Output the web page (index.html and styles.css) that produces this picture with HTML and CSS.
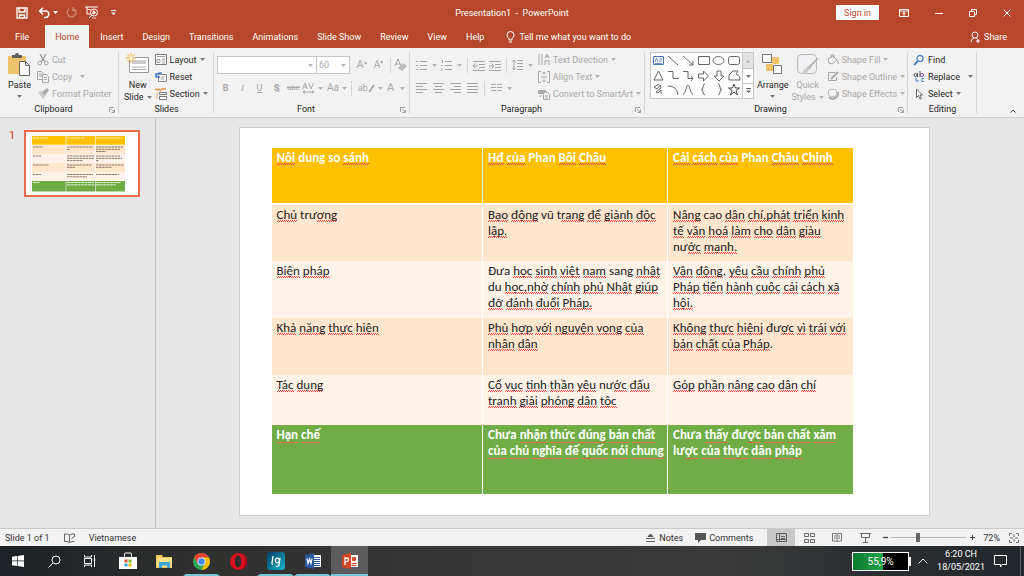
FILE: index.html
```html
<!DOCTYPE html>
<html lang="vi">
<head>
<meta charset="utf-8">
<title>Presentation1 - PowerPoint</title>
<link rel="stylesheet" href="styles.css">
</head>
<body>
<svg class="defs" aria-hidden="true">
  <symbol id="caret" viewBox="0 0 5 3"><path d="M0 0h5L2.500 3z" fill="currentColor"/></symbol>
  <symbol id="launch" viewBox="0 0 6 6"><path d="M.5 5V.5H5M2 2l3 3M5.500 2.500v3h-3" fill="none" stroke="currentColor" stroke-width=".8"/></symbol>
</svg>
<div class="app">
  <header class="titlebar">
    <div class="quick">
      <button aria-label="Save"><svg width="12" height="12" viewBox="0 0 12 12"><path d="M1 1h10v10H1zM3 1v4h6V1M3.500 11V8h5v3" class="ln2"/></svg></button>
      <button aria-label="Undo" class="undo"><svg width="12" height="12" viewBox="0 0 12 12"><path d="M2 4h5.500a3 3 0 0 1 0 6.500H6M5 .8L1.500 4 5 7.200" fill="none" stroke="#fff" stroke-width="1.500"/></svg><svg class="caret"><use href="#caret"/></svg></button>
      <button aria-label="Redo" class="dim"><svg width="11" height="11" viewBox="0 0 11 11"><path d="M7.500 1.800A4.300 4.300 0 1 1 3.200 2M7 0v3.500h3.500" class="ln2"/></svg></button>
      <button aria-label="Start from beginning"><svg width="14" height="13" viewBox="0 0 14 13"><path d="M0 1h13M2 1v7h4M4 12l3-3M2.500 3.500h3" class="ln"/><circle cx="9" cy="6.500" r="3.500" class="ln"/><path d="M8 4.800l3 1.700-3 1.700zM7 12h4" fill="#fff" stroke="#fff" stroke-width=".7"/></svg></button>
      <button aria-label="Customize"><svg width="5" height="6" viewBox="0 0 5 6"><path d="M0 .5h5" class="ln"/><path d="M0 2.500h5L2.500 5z" fill="#fff"/></svg></button>
    </div>
    <div class="doc">Presentation1&nbsp; -&nbsp; PowerPoint</div>
    <div class="winctl">
      <button class="signin">Sign in</button>
      <button aria-label="Ribbon display"><svg width="10" height="8" viewBox="0 0 10 8"><path d="M.5 .5h9v7h-9zM.5 2h9M5 7V3.500M3.500 4.700L5 3.300l1.500 1.400" class="ln"/></svg></button>
      <button aria-label="Minimize"><svg width="8" height="8" viewBox="0 0 8 8"><path d="M0 4.500h8" class="ln"/></svg></button>
      <button aria-label="Restore"><svg width="8" height="8" viewBox="0 0 8 8"><path d="M.5 2.500h5v5h-5zM2.500 2.500v-2h5v5h-2" class="ln"/></svg></button>
      <button aria-label="Close"><svg width="8" height="8" viewBox="0 0 8 8"><path d="M.5 .5l7 7M7.500 .5l-7 7" class="ln"/></svg></button>
    </div>
  </header>
  <nav class="tabs">
    <button class="file">File</button>
    <button class="on">Home</button>
    <button>Insert</button>
    <button>Design</button>
    <button>Transitions</button>
    <button>Animations</button>
    <button>Slide Show</button>
    <button>Review</button>
    <button>View</button>
    <button>Help</button>
    <button class="tell"><svg width="9" height="12" viewBox="0 0 9 12"><path d="M3 9V7.500Q1 6 1 4a3.500 3.500 0 0 1 7 0q0 2-2 3.500V9zM3 11h3" class="ln"/></svg>Tell me what you want to do</button>
    <button class="share"><svg width="11" height="12" viewBox="0 0 11 12"><circle cx="5" cy="4" r="3" class="ln"/><path d="M1 11q0-3 3-4M6.500 7l1 1M6 10h4M8 8v4" class="ln"/></svg>Share</button>
  </nav>

  <section class="ribbon">
    <div class="group">
      <div class="gbody clip">
        <button class="big"><svg width="23" height="24" viewBox="0 0 23 24"><path d="M0 3h18v18H0z" fill="#efc36c"/><path d="M4 2h3q0-2 2-2t2 2h3v3H4z" fill="#5f5f5f"/><path d="M11.500 8.500h6l4 4v10h-10z" fill="#fff" stroke="#666"/><path d="M17.500 8.500v4h4" fill="none" stroke="#666"/></svg><span>Paste</span><svg class="caret"><use href="#caret"/></svg></button>
        <div class="stack off">
          <button><svg width="12" height="12" viewBox="0 0 12 12"><path d="M3 0l5 8M9 0L4 8" stroke="#999" stroke-width="1.300"/><circle cx="2.700" cy="9" r="1.900" class="g"/><circle cx="9.300" cy="9" r="1.900" class="g"/></svg>Cut</button>
          <button><svg width="12" height="12" viewBox="0 0 12 12"><path d="M.5 .5h4l2 2v6h-6zM2 3h3M2 5h3" class="g"/><path d="M5.500 3.500h4l2 2v6h-6z" fill="#f2f2f2" stroke="#aaa"/><path d="M7 6.500h3M7 8.500h3" class="g"/></svg>Copy<svg class="caret wide"><use href="#caret"/></svg></button>
          <button><svg width="12" height="12" viewBox="0 0 12 12"><path d="M1 4l4-1 4 4-3 4z" fill="#ccc"/><path d="M5 4l5-4 2 2-4 5z" fill="#aaa"/></svg>Format Painter</button>
        </div>
      </div>
      <div class="glabel opt">Clipboard<button aria-label="Clipboard options"><svg width="6" height="6"><use href="#launch"/></svg></button></div>
    </div>

    <div class="group">
      <div class="gbody slides">
        <button class="big"><svg width="24" height="24" viewBox="0 0 24 24"><path d="M3.500 4.500h19v15h-19z" fill="#fff" stroke="#999"/><path d="M6 7h14v4H6z" fill="#ccc"/><path d="M6 14h14M6 16.500h14" stroke="#aaa"/><path d="M5 0v10M0 5h10M1.500 1.500l7 7M8.500 1.500l-7 7" stroke="#efc36c" stroke-width="1.300"/><circle cx="5" cy="5" r="2" fill="#fff3d5"/></svg><span>New</span><span>Slide <svg class="caret"><use href="#caret"/></svg></span></button>
        <div class="stack">
          <button><svg width="12" height="11" viewBox="0 0 12 11"><path d="M.5 .5h11v10H.5z" fill="#fff" stroke="#777"/><path d="M2 2.500h8M2 5.500h3v3H2zM7 5h3M7 7h3M7 9h3" fill="none" stroke="#999"/></svg>Layout<svg class="caret"><use href="#caret"/></svg></button>
          <button><svg width="12" height="12" viewBox="0 0 12 12"><path d="M3.500 3.500h8v7h-8z" fill="#fff" stroke="#888"/><path d="M5.500 6h4M5.500 8h4" stroke="#aaa"/><path d="M1 6q0-4.500 6-4M1 2v4h4" fill="none" stroke="#3b7cc0" stroke-width="1.400"/></svg>Reset</button>
          <button><svg width="12" height="12" viewBox="0 0 12 12"><path d="M0 1.500h5M5 3l2-2h4" fill="none" stroke="#e8903c" stroke-width="1.300"/><path d="M4.500 4.500h7v2h-7zM4.500 8.500h7v3h-7z" fill="#fff" stroke="#777"/><path d="M2 4v7" stroke="#e8b07a"/></svg>Section<svg class="caret"><use href="#caret"/></svg></button>
        </div>
      </div>
      <div class="glabel">Slides</div>
    </div>

    <div class="group">
      <div class="gbody rows off">
        <div class="row top">
          <div class="combo name"><select aria-label="Font"><option></option></select><svg class="caret"><use href="#caret"/></svg></div>
          <div class="combo size"><select aria-label="Font size"><option>60</option></select><svg class="caret"><use href="#caret"/></svg></div>
          <button class="sq t11" aria-label="Grow font">A<sup>▴</sup></button>
          <button class="sq t10" aria-label="Shrink font">A<sup>▾</sup></button>
          <i class="sep"></i>
          <button aria-label="Clear formatting"><svg width="12" height="12" viewBox="0 0 12 12"><path d="M0 7l3-7 3 7M1 5h4" class="g"/><path d="M3 9l5-5 4 3-5 5z" fill="#bbb"/></svg></button>
        </div>
        <div class="row fmt">
          <button class="sq"><b>B</b></button>
          <button class="sq ser"><em>I</em></button>
          <button class="sq"><u>U</u></button>
          <button class="sq shadow"><b>S</b></button>
          <button class="sq t8"><s>abc</s></button>
          <button class="drop" aria-label="Character spacing"><svg width="13" height="12" viewBox="0 0 13 12"><path d="M.5 7l2.500-6 2.500 6M1.500 5h3M6.500 1L9 7l2.500-6M1 10h11M3 8.500L1 10l2 1.500M10 8.500l2 1.500-2 1.500" class="g"/></svg><svg class="caret"><use href="#caret"/></svg></button>
          <button class="drop t10">Aa<svg class="caret"><use href="#caret"/></svg></button>
          <i class="sep"></i>
          <button class="drop hl" aria-label="Highlight"><span>ab</span><svg width="6" height="9" viewBox="0 0 6 9"><path d="M0 8l5-7" stroke="#999" stroke-width="1.500"/></svg><svg class="caret"><use href="#caret"/></svg></button>
          <button class="drop t11 fc">A<svg class="caret"><use href="#caret"/></svg></button>
        </div>
      </div>
      <div class="glabel opt">Font<button aria-label="Font options"><svg width="6" height="6"><use href="#launch"/></svg></button></div>
    </div>

    <div class="group">
      <div class="gbody para off">
        <div class="rows">
          <div class="row top">
            <button class="drop" aria-label="Bullets"><svg width="11" height="11" viewBox="0 0 11 11"><path d="M4 1.500h7M4 5.500h7M4 9.500h7M0 1.500h2M0 5.500h2M0 9.500h2" class="g"/></svg><svg class="caret"><use href="#caret"/></svg></button>
            <button class="drop" aria-label="Numbering"><svg width="11" height="11" viewBox="0 0 11 11"><path d="M4 1.500h7M4 5.500h7M4 9.500h7M1.500 0v3M0 5.500h2M1 8v3" class="g"/></svg><svg class="caret"><use href="#caret"/></svg></button>
            <i class="sep"></i>
            <button aria-label="Decrease indent"><svg width="12" height="11" viewBox="0 0 12 11"><path d="M0 1.500h12M6 4.500h6M6 7.500h6M0 10.500h12M0 6h5M2.500 3.500L0 6l2.500 2.500" class="g"/></svg></button>
            <button aria-label="Increase indent"><svg width="12" height="11" viewBox="0 0 12 11"><path d="M0 1.500h12M6 4.500h6M6 7.500h6M0 10.500h12M0 6h5M2.500 3.500L5 6 2.500 8.500" class="g"/></svg></button>
            <i class="sep"></i>
            <button class="drop" aria-label="Line spacing"><svg width="11" height="12" viewBox="0 0 11 12"><path d="M5 1.500h6M5 4.500h6M5 7.500h6M5 10.500h6M2 1v10M.5 3L2 1l1.500 2M.5 9L2 11l1.500-2" class="g"/></svg><svg class="caret"><use href="#caret"/></svg></button>
          </div>
          <div class="row align">
            <button aria-label="Align left"><svg width="11" height="10" viewBox="0 0 11 10"><path d="M0 .5h11M0 3.500h7M0 6.500h11M0 9.500h7" class="g"/></svg></button>
            <button aria-label="Center"><svg width="11" height="10" viewBox="0 0 11 10"><path d="M0 .5h11M2 3.500h7M0 6.500h11M2 9.500h7" class="g"/></svg></button>
            <button aria-label="Align right"><svg width="11" height="10" viewBox="0 0 11 10"><path d="M0 .5h11M4 3.500h7M0 6.500h11M4 9.500h7" class="g"/></svg></button>
            <button aria-label="Justify"><svg width="11" height="10" viewBox="0 0 11 10"><path d="M0 .5h11M0 3.500h11M0 6.500h11M0 9.500h11" class="g"/></svg></button>
            <i class="sep"></i>
            <button class="drop" aria-label="Columns"><svg width="11" height="10" viewBox="0 0 11 10"><path d="M0 1.500h5M0 4.500h5M0 7.500h5M6 1.500h5M6 4.500h5M6 7.500h5" class="g"/></svg><svg class="caret"><use href="#caret"/></svg></button>
          </div>
        </div>
        <div class="stack">
          <button><svg width="12" height="12" viewBox="0 0 12 12"><path d="M1 0v11M4 0v11M7 11V6M11 11V6M7 4l2-4 2 4M7 7h4M8 2.500h2" class="g"/></svg>Text Direction<svg class="caret"><use href="#caret"/></svg></button>
          <button><svg width="12" height="12" viewBox="0 0 12 12"><path d="M3 .5H.5v11H3M9 .5h2.500v11H9M6 1v3M6 11V8M3 6h6M4.500 2.500L6 1l1.500 1.500M4.500 9.500L6 11l1.500-1.500" class="g"/></svg>Align Text<svg class="caret"><use href="#caret"/></svg></button>
          <button><svg width="12" height="12" viewBox="0 0 12 12"><path d="M0 2h7l2 2-2 2H0z" fill="#aaa"/><path d="M5.500 4.500h4l2 2v5h-6z" fill="#f2f2f2" stroke="#aaa"/><path d="M1 8h3M7 8h3M7 10h3" class="g"/></svg>Convert to SmartArt<svg class="caret"><use href="#caret"/></svg></button>
        </div>
      </div>
      <div class="glabel opt">Paragraph<button aria-label="Paragraph options"><svg width="6" height="6"><use href="#launch"/></svg></button></div>
    </div>

    <div class="group">
      <div class="gbody drawing">
        <div class="gallery">
          <svg width="91" height="44" viewBox="0 0 91 44" role="img" aria-label="Shapes">
            <g fill="none" stroke="#666">
              <path d="M2.500 3.500h10v8h-10z" stroke="#4a78b5"/><path d="M4 9l1.500-4L7 9M8 6h3M8 8h3M4 10.500h7" stroke="#4a78b5" stroke-width=".8"/>
              <path d="M17 3l10 9M32 3l10 9M42 8v4h-4"/><path d="M47.500 3.500h11v8h-11z"/><ellipse cx="67.500" cy="7.500" rx="5.500" ry="4"/><rect x="77.500" y="3.500" width="11" height="8" rx="2"/>
              <path d="M7.500 18l4.500 9H3zM17 18.500h5v7h6M32 18.500h5v7h5M40 23l2 2.500-2 2.500"/>
              <path d="M47.500 21h5v-3l5 5-5 5v-3h-5zM66 18h4v5h3l-5 5-5-5h3zM78 27v-5l4-4h5q-3 3-1 4 3 0 3 5z"/>
              <path d="M8 31l-5 3 3 2 3-4 1 3-5 4 2 1 3-3v4M17 33q9 0 10 9M32 41c3 0 3-9 5-9s2 9 5 9"/>
              <path d="M54 31q-2 0-2 3t-2 2.500q2 0 2 2.500t2 3M67 31q2 0 2 3t2 2.500q-2 0-2 2.500t-2 3"/>
              <path d="M83 31l1.500 4h4L85 37.500l1.500 4.500-3.500-3-3.500 3 1.500-4.500-3.500-2.500h4z" stroke="#444"/>
            </g>
          </svg>
          <div class="scroll"><button aria-label="Scroll up" disabled>▴</button><button aria-label="Scroll down"><svg class="caret"><use href="#caret"/></svg></button><button aria-label="More shapes"><svg width="5" height="6" viewBox="0 0 5 6"><path d="M0 .5h5" stroke="#666"/><path d="M0 2.500h5L2.500 5z" fill="#666"/></svg></button></div>
        </div>
        <button class="big"><svg width="21" height="24" viewBox="0 0 21 24"><path d="M10 4h7v7h-7zM4 11h7v7H4z" fill="#efc36c"/><path d="M.5 1.500h9v8h-9zM11.500 12.500h8v8h-8z" fill="#fff" stroke="#777"/></svg><span>Arrange</span><svg class="caret"><use href="#caret"/></svg></button>
        <button class="big off"><svg width="24" height="24" viewBox="0 0 24 24"><rect x="1.500" y="1.500" width="19" height="19" rx="4" fill="#f0f0f2" stroke="#bbb"/><path d="M22 5l-9 11-2-1z" fill="#ccc" stroke="#aaa"/><path d="M11 15q-4 1-5 6 5 1 7-5z" fill="#ccc"/></svg><span>Quick</span><span>Styles <svg class="caret"><use href="#caret"/></svg></span></button>
        <div class="stack off">
          <button><svg width="12" height="12" viewBox="0 0 12 12"><path d="M1 5l5-3 4 4-5 4-3-1zM4 4V1h3v3M10 6q2 2 1 4" class="g"/></svg>Shape Fill<svg class="caret"><use href="#caret"/></svg></button>
          <button><svg width="12" height="12" viewBox="0 0 12 12"><path d="M8 1.500H1.500v8h8V6" class="g"/><path d="M4 8l7-7" stroke="#aaa" stroke-width="2"/></svg>Shape Outline<svg class="caret"><use href="#caret"/></svg></button>
          <button><svg width="12" height="12" viewBox="0 0 12 12"><path d="M2 9q2 3 6 1t3-6" fill="none" stroke="#aaa" stroke-width="2"/><rect x="1.500" y="1.500" width="8" height="7" rx="2.500" fill="#f5f5f5" stroke="#bbb"/></svg>Shape Effects<svg class="caret"><use href="#caret"/></svg></button>
        </div>
      </div>
      <div class="glabel opt">Drawing<button aria-label="Drawing options"><svg width="6" height="6"><use href="#launch"/></svg></button></div>
    </div>

    <div class="group">
      <div class="gbody edit">
        <div class="stack">
          <button><svg width="12" height="12" viewBox="0 0 12 12"><circle cx="7" cy="4.500" r="3" fill="#fff" stroke="#4b83c4" stroke-width="1.300"/><path d="M5 7l-4 4" stroke="#4b83c4" stroke-width="1.800"/></svg>Find</button>
          <button><svg width="12" height="12" viewBox="0 0 12 12"><circle cx="2.500" cy="4" r="1.500" fill="none" stroke="#555"/><path d="M4.500 2v4M7 0v6" stroke="#555"/><circle cx="9" cy="4" r="1.600" fill="none" stroke="#8a5fb5"/><path d="M3 7v3h3M11 7.500H9v3h2" fill="none" stroke="#4b83c4"/></svg>Replace<svg class="caret wide"><use href="#caret"/></svg></button>
          <button><svg width="12" height="12" viewBox="0 0 12 12"><path d="M3.500 1v8.500l2-2 1.500 3.500 1.500-.7L7 7h2.500z" fill="#fff" stroke="#555" stroke-width=".9"/></svg>Select<svg class="caret"><use href="#caret"/></svg></button>
        </div>
      </div>
      <div class="glabel">Editing</div>
    </div>
    <div class="fold"><button aria-label="Collapse ribbon"><svg width="6" height="4" viewBox="0 0 6 4"><path d="M.5 3.500L3 1l2.500 2.500" fill="none" stroke="#555"/></svg></button></div>
  </section>

  <main class="work">
    <aside class="thumbs">
      <span class="num">1</span>
      <svg class="thumb" viewBox="0 0 112 63" role="img" aria-label="Slide 1">
        <rect width="112" height="63" fill="#fff"/>
        <path d="M6 4h93v9H6z" fill="#ffc000"/><path d="M6 13h93v9H6zM6 31h93v9H6z" fill="#ffe6cd"/><path d="M6 22h93v9H6zM6 40h93v9H6z" fill="#fff2e8"/><path d="M6 49h93v10.500H6z" fill="#6fac46"/>
        <path d="M40 4v56M69.500 4v56M6 13h93" stroke="#fff" stroke-width=".6"/>
        <g stroke="#fff" stroke-opacity=".8" stroke-dasharray="3 .5"><path d="M7 6h15M41 6h18M70 6h26M7 50.500h7M41 50.500h27M41 52.800h28M70 50.500h25M70 52.800h20"/></g>
        <g stroke="#8a7566" stroke-dasharray="2.500 .6"><path d="M7 15h10M41 15h26M41 17.500h3M70 15h27M70 17.300h24M70 19.500h10M7 24h8M41 24h28M41 26.300h27M41 28.600h16M70 24h24M70 26.300h26M70 28.600h3M7 33h16M41 33h25M41 35.300h8M70 33h28M70 35.300h16M7 42.500h8M41 42.500h26M41 44.800h20M70 42.500h23"/></g>
      </svg>
    </aside>
    <div class="canvas">
      <article class="slide">
        <table>
          <colgroup><col class="c1"><col class="c2"><col class="c3"></colgroup>
          <thead>
            <tr><th><q>Nôi</q> dung so <q>sánh</q></th><th><q>Hđ</q> <q>của</q> Phan <q>Bôi</q> <q>Châu</q></th><th><q>Cải</q> <q>cách</q> <q>của</q> Phan <q>Châu</q> <q>Chinh</q></th></tr>
          </thead>
          <tbody>
            <tr class="a"><td><q>Chủ</q> trư<q>ơng</q></td><td><q>Bạo</q> <q>động</q> vũ t<q>rang</q> <q>để</q> <q>giành</q> <q>độc</q><br><q>lập.</q></td><td><q>Nâng</q> cao <q>dân</q> <q>chí,phát</q> <q>triển</q> <q>kinh</q><br><q>tế</q> <q>văn</q> <q>hoá</q> <q>làm</q> <q>cho</q> <q>dân</q> <q>giàu</q><br>nư<q>ớc</q> <q>mạnh.</q></td></tr>
            <tr class="b"><td><q>Biện</q> <q>pháp</q></td><td>Đưa <q>học</q> <q>sinh</q> <q>việt</q> <q>nam</q> sang <q>nhật</q><br>du <q>học,nhờ</q> <q>chính</q> <q>phủ</q> <q>Nhật</q> <q>giúp</q><br><q>đỡ</q> <q>đánh</q> <q>đuổi</q> <q>Pháp.</q></td><td><q>Vận</q> <q>động</q>, <q>yêu</q> <q>cầu</q> <q>chính</q> <q>phủ</q><br><q>Pháp</q> <q>tiến</q> <q>hành</q> <q>cuộc</q> <q>cải</q> <q>cách</q> <q>xã</q><br><q>hội.</q></td></tr>
            <tr class="a"><td><q>Khả</q> <q>năng</q> <q>thực</q> <q>hiện</q></td><td><q>Phù</q> <q>hợp</q> <q>với</q> <q>nguyện</q> <q>vọng</q> <q>của</q><br><q>nhân</q> <q>dân</q></td><td><q>Không</q> <q>thực</q> <q>hiệnj</q> đư<q>ợc</q> <q>vì</q> <q>trái</q> <q>với</q><br><q>bản</q> <q>chất</q> <q>của</q> <q>Pháp</q>.</td></tr>
            <tr class="b short"><td><q>Tác</q> <q>dụng</q></td><td><q>Cổ</q> <q>vục</q> <q>tinh</q> <q>thần</q> <q>yêu</q> nư<q>ớc</q> <q>đấu</q><br><q>tranh</q> <q>giải</q> <q>phóng</q> <q>dân</q> <q>tộc</q></td><td><q>Góp</q> <q>phần</q> <q>nâng</q> <q>cao</q> <q>dân</q> <q>chí</q></td></tr>
            <tr class="last"><th><q>Hạn</q> <q>chế</q></th><th>Chưa <q>nhận</q> <q>thức</q> <q>đúng</q> <q>bản</q> <q>chất</q><br><q>của</q> <q>chủ</q> <q>nghĩa</q> <q>đế</q> <q>quốc</q> <q>nói</q> <q>chung</q></th><th>Chưa <q>thấy</q> đư<q>ợc</q> <q>bản</q> <q>chất</q> <q>xâm</q><br>lư<q>ợc</q> <q>của</q> <q>thực</q> <q>dân</q> <q>pháp</q></th></tr>
          </tbody>
        </table>
      </article>
    </div>
  </main>

  <footer class="status">
    <span>Slide 1 of 1</span>
    <svg class="book" width="12" height="10" viewBox="0 0 12 10"><path d="M5.500 9V2Q3 .5.500 1v7.500Q3 8 5.500 9.500 8 8 10.500 8.500M5.500 2Q8 .5 10.500 1v3M7.500 6l3-3" fill="none" stroke="#666"/></svg>
    <span>Vietnamese</span>
    <div class="sright">
      <button class="notes"><svg width="9" height="8" viewBox="0 0 9 8"><path d="M0 4.500h9M0 7.500h9M2 2.500h5L4.500 0z" stroke="#555" fill="#555" stroke-width=".9"/></svg>Notes</button>
      <button class="comm"><svg width="11" height="10" viewBox="0 0 11 10"><path d="M0 0h11v7H6L3 10V7H0z" fill="#555"/></svg>Comments</button>
      <button class="view on" aria-label="Normal"><svg width="11" height="9" viewBox="0 0 11 9"><path d="M.5 .5h10v8H.5zM3.500 .5v8M5 3.500h4M5 5.500h4M.5 6.500h10" fill="none" stroke="#555" stroke-width=".9"/></svg></button>
      <button class="view" aria-label="Slide sorter"><svg width="11" height="10" viewBox="0 0 11 10"><path d="M.5 .5h4v3h-4zM6.500 .5h4v3h-4zM.5 6.500h4v3h-4zM6.500 6.500h4v3h-4z" fill="none" stroke="#666"/></svg></button>
      <button class="view" aria-label="Reading view"><svg width="10" height="9" viewBox="0 0 10 9"><path d="M5 8.500V1Q3 0 .5.500v7.500h3L5 9l1.500-1h3V.5Q7 0 5 1M2 3h2M2 5h2M6 3h2M6 5h2" fill="none" stroke="#666" stroke-width=".9"/></svg></button>
      <button class="view" aria-label="Slide show"><svg width="11" height="10" viewBox="0 0 11 10"><path d="M0 .5h11M1.500 .5v4h8v-4M5.500 5v4M3 9.500h5" fill="none" stroke="#666"/></svg></button>
      <button class="out" aria-label="Zoom out"><svg width="5" height="5" viewBox="0 0 5 5"><path d="M0 2.500h5" stroke="#444" stroke-width="1.300"/></svg></button>
      <input type="range" min="10" max="240" value="90" aria-label="Zoom">
      <button aria-label="Zoom in"><svg width="5" height="5" viewBox="0 0 5 5"><path d="M0 2.500h5M2.500 0v5" stroke="#444"/></svg></button>
      <button class="pct">72%</button>
      <button aria-label="Fit slide"><svg width="10" height="10" viewBox="0 0 10 10"><path d="M.5 3V.5H3M7 .5h2.500V3M9.500 7v2.500H7M3 9.500H.5V7" fill="none" stroke="#777"/><path d="M5 1v3M5 9V6M1 5h3M9 5H6" stroke="#777"/></svg></button>
    </div>
  </footer>

  <footer class="taskbar">
    <div class="sys">
      <button aria-label="Start"><svg width="12" height="12" viewBox="0 0 12 12"><path d="M0 1.700L5 1v4.600H0zM5.700 .9L12 0v5.600H5.700zM0 6.300h5V11l-5-.7zM5.700 6.300H12V12l-6.300-.9z" fill="#fff"/></svg></button>
      <button aria-label="Search"><svg width="13" height="13" viewBox="0 0 13 13"><circle cx="8" cy="5" r="4" class="ln"/><path d="M5 8l-4.500 4.500" class="ln"/></svg></button>
      <button aria-label="Task view"><svg width="12" height="12" viewBox="0 0 12 12"><path d="M.5 0v2h7V0M.5 12v-2h7v2M.5 3.500h7v5h-7zM10.500 0v12M9.500 5h2" class="ln"/></svg></button>
    </div>
    <div class="apps">
      <button aria-label="Store"><svg width="18" height="18" viewBox="0 0 18 18"><path d="M5.500 6V2Q5.500 1 6.500 1h5q1 0 1 1v4" fill="none" stroke="#fff"/><path d="M0 5h18v12H0z" fill="#fff"/><path d="M5.500 7.500h3v3h-3z" fill="#e34f26"/><path d="M9.500 7.500h3v3h-3z" fill="#7cb82f"/><path d="M5.500 11.500h3v3h-3z" fill="#2a9fe0"/><path d="M9.500 11.500h3v3h-3z" fill="#f5b800"/></svg></button>
      <button aria-label="Files"><svg width="17" height="15" viewBox="0 0 17 15"><path d="M0 1h6l1 2h9v11H0z" fill="#f3c757"/><path d="M1 4h15v9H1z" fill="#fbe08c"/><path d="M3 8h11v6h-3v-2.500H6V14H3z" fill="#3ea4dc"/></svg></button>
      <button aria-label="Chrome" class="run"><svg width="17" height="17" viewBox="0 0 17 17"><circle cx="8.500" cy="8.500" r="8.500" fill="#34a853"/><path d="M1 4.500a8.500 8.500 0 0 1 15 0H8.500L5 10z" fill="#ea4335"/><path d="M16 4.500A8.500 8.500 0 0 1 8.500 17l4-7L8.500 4.500z" fill="#fbbc04"/><circle cx="8.500" cy="8.500" r="4" fill="#fff"/><circle cx="8.500" cy="8.500" r="3.200" fill="#4285f4"/></svg></button>
      <button aria-label="Opera"><svg width="17" height="17" viewBox="0 0 17 17"><ellipse cx="8.500" cy="8.500" rx="8.500" ry="8.500" fill="#d8101f"/><path d="M9 0a8.500 8.500 0 0 1 0 17 6 8 0 0 0 0-17" fill="#a30f1a"/><ellipse cx="8" cy="8.500" rx="3.200" ry="6" fill="#2e2e2e"/></svg></button>
      <button aria-label="Lg" class="run"><svg width="18" height="18" viewBox="0 0 18 18"><defs><linearGradient id="lg" x2="1" y2="1"><stop stop-color="#063c66"/><stop offset="1" stop-color="#12b5c9"/></linearGradient></defs><rect width="18" height="18" rx="3" fill="url(#lg)"/><path d="M6 4L5 11q0 1.500 1 1.500M13 6l-1 7q-.5 2-3.500 1" fill="none" stroke="#fff" stroke-width="1.300"/><ellipse cx="10.300" cy="8.500" rx="2" ry="2.300" fill="none" stroke="#fff" stroke-width="1.200"/></svg></button>
      <button aria-label="Word" class="run"><svg width="16" height="16" viewBox="0 0 16 16"><path d="M8 2h8v12H8z" fill="#fff"/><path d="M9 4.500h6M9 6.500h6M9 8.500h6M9 10.500h6M9 12.500h6" stroke="#2b579a"/><path d="M0 2l9-2v16l-9-2z" fill="#2b579a"/><path d="M2 5.500l1 5 1.500-4.500L6 10.500l1-5" fill="none" stroke="#fff" stroke-width="1.200"/></svg></button>
      <button aria-label="PowerPoint" class="run cur"><svg width="16" height="16" viewBox="0 0 16 16"><path d="M8 2h8v12H8z" fill="#fff"/><circle cx="12" cy="6" r="2.300" fill="#d24726"/><path d="M9.500 10.500h5M9.500 12.500h5" stroke="#d24726"/><path d="M0 2l9-2v16l-9-2z" fill="#d24726"/><path d="M3 12V5h1.800q1.700 0 1.700 1.800T4.800 8.600H3" fill="none" stroke="#fff" stroke-width="1.300"/></svg></button>
    </div>
    <div class="tray">
      <div class="batt">55,9%</div>
      <button aria-label="Show hidden icons"><svg width="10" height="6" viewBox="0 0 10 6"><path d="M.5 5.500L5 1l4.500 4.500" class="ln"/></svg></button>
      <div class="clock">6:20 CH<br>18/05/2021</div>
      <button aria-label="Notifications"><svg width="13" height="13" viewBox="0 0 13 13"><path d="M.5 .5h12v9H8L6.500 12V9.500h-6z" class="ln"/></svg></button>
      <i class="peek"></i>
    </div>
  </footer>
</div>
</body>
</html>
```
FILE: styles.css
```css
* { box-sizing: border-box; }
body {
  margin: 0;
  font: 9px/12px Roboto, "Noto Sans", sans-serif;
  color: #262626;
}
button, select {
  font: inherit;
  color: inherit;
  background: none;
  border: 0;
  margin: 0;
  padding: 0;
  display: inline-flex;
  align-items: center;
  white-space: nowrap;
}
svg { display: block; flex: none; }
.defs { display: none; }
.ln { fill: none; stroke: #fff; stroke-width: 1; }
.ln2 { fill: none; stroke: #fff; stroke-width: 1.3; }
.g { fill: none; stroke: #a6a6a6; stroke-width: 1; }
.caret { width: 5px; height: 3px; color: #777; }
.off { color: #a9a9a9; }
.off .caret { color: #b3b3b3; }

.app { display: flex; flex-direction: column; height: 100vh; overflow: hidden; }

/* title bar */
.titlebar {
  display: grid;
  grid-template-columns: 1fr auto 1fr;
  align-items: center;
  height: 25px;
  background: #b7472a;
  color: #fff;
}
.quick { display: flex; align-items: center; gap: 8px; padding-left: 16px; }
.quick .undo { gap: 3px; margin-left: 2px; }
.undo .caret { color: #fff; }
.quick .dim { opacity: 0.35; }
.quick button:last-child { margin-left: 4px; }
.winctl { display: flex; justify-content: flex-end; align-items: center; gap: 26px; padding-right: 13px; }
.signin { background: #fff; color: #b7472a; height: 15px; padding: 0 8px; margin-right: -6px; }

/* tabs */
.tabs { display: flex; height: 23px; background: #b7472a; color: #fff; }
.tabs button { padding: 0 10px 0 9px; }
.tabs .file { padding: 0 16px 0 15px; }
.tabs .on { background: #f2f2f2; color: #b7472a; padding: 0 10px; margin-right: 2px; }
.tabs .tell { gap: 4px; padding-left: 12px; }
.tabs .share { margin-left: auto; gap: 3px; padding-right: 17px; }

/* ribbon */
.ribbon {
  display: grid;
  grid-template-columns: 119fr 95fr 196fr 235fr 263fr 69fr 47fr;
  height: 70px;
  background: #f2f2f2;
  border-bottom: 1px solid #cfcfcf;
}
.group { position: relative; display: flex; flex-direction: column; min-width: 0; }
.group::after {
  content: "";
  position: absolute;
  right: 0;
  top: 4px;
  bottom: 4px;
  border-right: 1px solid #d5d5d5;
}
.gbody { display: flex; flex: 1; padding-top: 3px; }
.glabel { position: relative; height: 14px; text-align: center; }
.opt { padding-right: 12px; }
.glabel button { position: absolute; right: 4px; top: 4px; color: #888; }
.stack { display: flex; flex-direction: column; }
.stack button { height: 17px; gap: 3px; }
.stack .wide { margin-left: 5px; }
.big { flex-direction: column; align-items: center; padding-top: 2px; height: 52px; }
.big > svg:first-child { margin-bottom: 2px; }
.big span { height: 12px; display: flex; align-items: center; gap: 3px; }
.big > .caret { margin-top: 4px; }
.clip { padding-left: 8px; gap: 6px; }
.slides { padding-left: 5px; gap: 3px; }
.rows { display: flex; flex-direction: column; gap: 5px; }
.gbody.rows { padding: 8px 0 0 3px; }
.row { display: flex; align-items: center; height: 18px; }
.sep { width: 1px; height: 15px; background: #d5d5d5; }
.combo { position: relative; display: flex; align-items: center; height: 18px; background: #fff; border: 1px solid #c6c6c6; }
.combo select { appearance: none; width: 100%; padding-left: 2px; }
.combo .caret { position: absolute; right: 3px; pointer-events: none; }
.name { width: 100px; }
.size { width: 34px; margin-left: -1px; margin-right: 3px; }
.sq { width: 17px; flex: none; justify-content: center; }
.top .sep { margin: 0 4px 0 3px; }
.sq sup { font-size: 6px; line-height: 6px; align-self: flex-start; }
.t8 { font-size: 8px; }
.t10 { font-size: 10px; }
.t11 { font-size: 11px; }
.ser { font-family: "Liberation Serif", serif; }
.shadow { text-shadow: 1px 1px 0 #ccc; }
.drop { gap: 3px; }
.fmt .drop { margin-right: 4px; }
.fmt .sep { margin-right: 6px; }
.hl { gap: 1px; }
.hl .caret { margin-left: 2px; }
.fmt .fc { gap: 6px; margin: 0; }
.para { justify-content: space-between; padding-right: 4px; }
.para .rows { padding: 5px 0 0 6px; }
.para .row { gap: 4px; }
.para .align { gap: 6px; }
.para .drop { gap: 5px; }
.para .top .sep { margin: 0 1px; }
.drawing { padding: 3px 0 0 5px; gap: 3px; }
.gallery { display: flex; border: 1px solid #c6c6c6; background: #fff; height: 47px; margin-top: 1px; }
.scroll { display: grid; grid-template-rows: repeat(3, 1fr); width: 11px; }
.scroll button { justify-content: center; border-left: 1px solid #c6c6c6; border-top: 1px solid #c6c6c6; }
.scroll button:first-child { border-top: 0; background: #e2e2e2; color: #bbb; font-size: 8px; }
.edit { padding-left: 5px; }
.fold { display: flex; justify-content: flex-end; align-items: flex-end; padding: 0 8px 4px 0; }

/* work area */
.work { flex: 1; display: flex; min-height: 0; background: #e6e6e6; border-bottom: 1px solid #c9c9c9; }
.thumbs { width: 156px; flex: none; display: flex; align-items: flex-start; gap: 9px; padding: 11px 0 0 9px; border-right: 1px solid #c3c3c3; }
.num { font-size: 11px; line-height: 14px; color: #c8452c; width: 6px; }
.thumb { width: 116px; margin-top: 1px; border: 2px solid #ec6b4d; }
.canvas { flex: 1; display: flex; justify-content: center; align-items: flex-start; padding: 9px 12px 0 0; }
.slide { width: 81%; max-width: 691px; aspect-ratio: 16 / 9; background: #fff; border: 1px solid #cfcfcf; padding: 20px 76px 0 32px; }
table {
  width: 100%;
  border-collapse: collapse;
  table-layout: fixed;
  font: 13px/16px Carlito, Lato, sans-serif;
  color: #1c1c1c;
}
.c1 { width: 211px; }
.c2 { width: 185px; }
th, td { height: 57px; padding: 2px 0 0 5px; text-align: left; vertical-align: top; white-space: nowrap; }
th + th, td + td { border-left: 1px solid #fff; }
th { color: #fff; font-weight: 700; }
thead th { background: #ffc000; height: 56px; border-bottom: 2px solid #fff; }
.a td { background: #ffe6cc; }
.b td { background: #fff3e8; }
.short td { height: 50px; }
.last th { background: #70ad47; height: 69px; }

/* misspelled words */
q {
  quotes: none;
  background: repeating-conic-gradient(#ee4444 0 25%, transparent 0 50%) left bottom / 2px 2px repeat-x;
}
.last q { background: none; border-bottom: 1px solid #e0704f; }
q::before, q::after { content: none; }

/* status bar */
.status { display: flex; align-items: center; height: 17px; padding: 0 5px; background: #f2f2f2; color: #333; }
.book { margin: 0 13px 0 14px; }
.sright { display: flex; align-items: center; margin-left: auto; height: 100%; }
.sright button { gap: 4px; height: 100%; }
.sright .comm { margin: 0 14px 0 12px; gap: 3px; }
.view { width: 28px; justify-content: center; }
.sright .on { background: #c8c8c8; }
.sright input { appearance: none; width: 75px; height: 9px; margin: 0 4px 0 3px; background: linear-gradient(#b5b5b5, #b5b5b5) 0 4px / 100% 1px no-repeat; }
.sright input::-webkit-slider-thumb { appearance: none; width: 4px; height: 9px; background: #666; }
.sright .out { margin-left: 4px; }
.sright .pct { margin: 0 9px 0 8px; }

/* taskbar */
.taskbar { display: flex; align-items: stretch; height: 30px; background: linear-gradient(90deg, #1c2226, #30302f 20%, #3b3b3b 70%, #2b2f31 85%, #22282c); color: #fff; }
.sys, .apps, .tray { display: flex; }
.sys button { width: 36px; justify-content: center; }
.apps { margin-left: 1px; }
.apps button { width: 37px; justify-content: center; border: solid transparent; border-width: 2px 3px; }
.apps .run { border-bottom-color: #76c8d6; }
.apps .cur { background: #5c5c5c; border-left: 0; border-right: 0; }
.tray { margin-left: auto; align-items: center; gap: 9px; padding-right: 3px; }
.batt { position: relative; width: 57px; height: 19px; border: 1px solid #fff; background: linear-gradient(90deg, #0c7a2c, #1fa548 55%, #000 55%); font-size: 10px; line-height: 17px; text-align: center; }
.batt::after { content: ""; position: absolute; right: -3px; top: 4px; width: 2px; height: 9px; background: #fff; }
.clock { text-align: center; line-height: 13px; }
.peek { width: 1px; height: 30px; margin-left: 4px; background: #5a5f62; }
```
